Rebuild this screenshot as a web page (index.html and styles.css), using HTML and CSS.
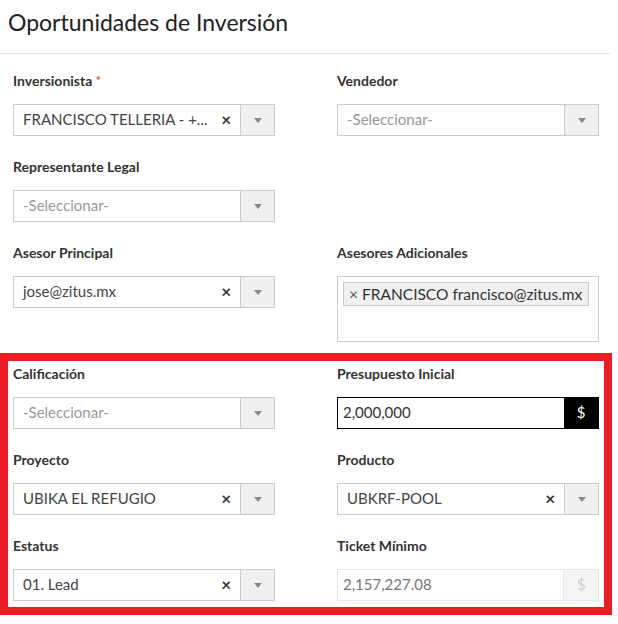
FILE: index.html
```html
<!DOCTYPE html>
<html lang="es">
<head>
    <meta charset="UTF-8">
    <meta name="viewport" content="width=device-width, initial-scale=1.0">
    <title>Oportunidades de Inversión</title>
    <link rel="stylesheet" href="styles.css">
</head>
<body>
    <div class="page-header">
        <h1>Oportunidades de Inversión</h1>
    </div>

    <div class="form">
        <div class="form-grid top">
            <div class="field">
                <label class="field-label">Inversionista <span class="required">*</span></label>
                <div class="select">
                    <span class="select-value">FRANCISCO TELLERIA - +...</span>
                    <span class="select-clear">×</span>
                    <span class="select-arrow"></span>
                </div>
            </div>
            <div class="field">
                <label class="field-label">Vendedor</label>
                <div class="select">
                    <span class="select-value placeholder">-Seleccionar-</span>
                    <span class="select-arrow"></span>
                </div>
            </div>

            <div class="field">
                <label class="field-label">Representante Legal</label>
                <div class="select">
                    <span class="select-value placeholder">-Seleccionar-</span>
                    <span class="select-arrow"></span>
                </div>
            </div>
            <div></div>

            <div class="field">
                <label class="field-label">Asesor Principal</label>
                <div class="select">
                    <span class="select-value">jose@zitus.mx</span>
                    <span class="select-clear">×</span>
                    <span class="select-arrow"></span>
                </div>
            </div>
            <div class="field">
                <label class="field-label">Asesores Adicionales</label>
                <div class="multi-select">
                    <span class="tag"><span class="tag-remove">×</span> FRANCISCO francisco@zitus.mx</span>
                </div>
            </div>
        </div>

        <div class="highlight">
            <div class="form-grid">
                <div class="field">
                    <label class="field-label">Calificación</label>
                    <div class="select">
                        <span class="select-value placeholder">-Seleccionar-</span>
                        <span class="select-arrow"></span>
                    </div>
                </div>
                <div class="field">
                    <label class="field-label">Presupuesto Inicial</label>
                    <div class="input-group active">
                        <span class="input-value">2,000,000</span>
                        <span class="input-addon">$</span>
                    </div>
                </div>

                <div class="field">
                    <label class="field-label">Proyecto</label>
                    <div class="select">
                        <span class="select-value">UBIKA EL REFUGIO</span>
                        <span class="select-clear">×</span>
                        <span class="select-arrow"></span>
                    </div>
                </div>
                <div class="field">
                    <label class="field-label">Producto</label>
                    <div class="select">
                        <span class="select-value">UBKRF-POOL</span>
                        <span class="select-clear">×</span>
                        <span class="select-arrow"></span>
                    </div>
                </div>

                <div class="field">
                    <label class="field-label">Estatus</label>
                    <div class="select">
                        <span class="select-value">01. Lead</span>
                        <span class="select-clear">×</span>
                        <span class="select-arrow"></span>
                    </div>
                </div>
                <div class="field">
                    <label class="field-label">Ticket Mínimo</label>
                    <div class="input-group disabled">
                        <span class="input-value">2,157,227.08</span>
                        <span class="input-addon">$</span>
                    </div>
                </div>
            </div>
        </div>
    </div>
</body>
</html>
```

FILE: styles.css
```css
body {
    margin: 0;
    font-family: Lato, "Liberation Sans", sans-serif;
    color: #333;
    background: #fff;
}
.page-header {
    width: 610px;
    padding: 7px 0 16px 8px;
    box-sizing: border-box;
    border-bottom: 1px solid #e3e3e3;
}
h1 {
    margin: 0;
    font-size: 23px;
    line-height: 30px;
    font-weight: normal;
    color: #222;
}
.form {
    padding-top: 17px;
}
.form-grid {
    display: grid;
    grid-template-columns: 262px 262px;
    column-gap: 62px;
    row-gap: 21px;
}
.form-grid.top {
    padding-left: 13px;
    margin-bottom: 11px;
}
.field-label {
    display: block;
    font-size: 14px;
    line-height: 20px;
    font-weight: bold;
    color: #333;
    margin-bottom: 13px;
}
.required {
    color: #e74c3c;
    font-size: 12px;
    vertical-align: top;
}

/* selects */
.select {
    display: flex;
    align-items: center;
    height: 32px;
    box-sizing: border-box;
    border: 1px solid #ccc;
    background: #fff;
}
.select-value {
    flex: 1;
    padding: 0 0 3px 9px;
    font-size: 15px;
    color: #444;
    white-space: nowrap;
    overflow: hidden;
}
.select-value.placeholder {
    color: #999;
}
.select-clear {
    font-size: 17px;
    font-weight: bold;
    color: #333;
    margin: 0 9px 2px 0;
}
.select-arrow {
    align-self: stretch;
    width: 33px;
    border-left: 1px solid #ccc;
    background: #f0f0f0;
    display: flex;
    align-items: center;
    justify-content: center;
}
.select-arrow::after {
    content: "";
    border-left: 4px solid transparent;
    border-right: 4px solid transparent;
    border-top: 5px solid #888;
}

.multi-select {
    height: 66px;
    box-sizing: border-box;
    border: 1px solid #ccc;
    padding: 5px 5px;
}
.tag {
    display: inline-block;
    border: 1px solid #ccc;
    background: #f0f0f0;
    font-size: 15.5px;
    line-height: 22px;
    padding: 0 6px 0 5px;
    color: #333;
}
.tag-remove {
    color: #555;
}

/* inputs with addon */
.input-group {
    display: flex;
    height: 32px;
    box-sizing: border-box;
    border: 1px solid #ccc;
}
.input-value {
    flex: 1;
    padding-left: 5px;
    font-size: 15px;
    line-height: 28px;
    color: #333;
}
.input-addon {
    width: 34px;
    text-align: center;
    font-size: 15px;
    line-height: 28px;
}
.input-group.active {
    border-color: #000;
}
.input-group.active .input-addon {
    background: #000;
    color: #fff;
}
.input-group.disabled {
    border-color: #e6e6e6;
}
.input-group.disabled .input-value {
    color: #777;
}
.input-group.disabled .input-addon {
    background: #f5f5f5;
    color: #ccc;
    border-left: 1px solid #e6e6e6;
}

.highlight {
    width: 612px;
    box-sizing: border-box;
    border: 8px solid #ed1c24;
    padding: 3px 5px 6px 5px;
}
```
